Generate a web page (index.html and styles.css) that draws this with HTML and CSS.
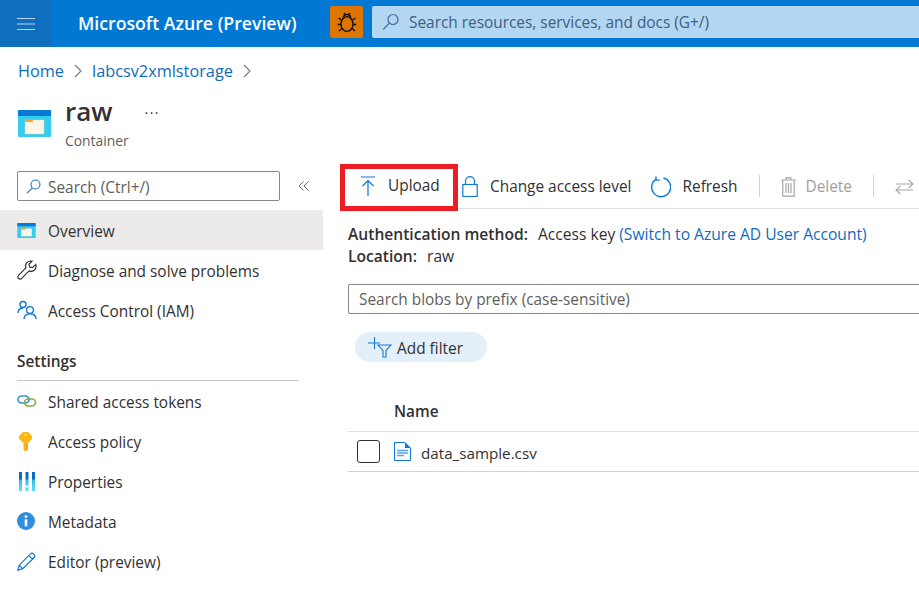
FILE: index.html
```html
<!DOCTYPE html>
<html lang="en">
  <head>
    <meta charset="UTF-8" />
    <title>raw - Microsoft Azure</title>
    <link rel="stylesheet" href="styles.css">
  </head>
  <body>
    <header class="topbar">
      <button class="menu-btn" aria-label="Menu">
        <svg width="18" height="14" viewBox="0 0 18 14"><path d="M0 1.500h18M0 7h18M0 12.500h18" stroke="#b9d6f0" stroke-width="1.200" fill="none"/></svg>
      </button>
      <div class="brand">Microsoft Azure (Preview)</div>
      <div class="bug">
        <svg width="20" height="22" viewBox="0 0 20 22" fill="none" stroke="#111" stroke-width="1.400"><ellipse cx="10" cy="13" rx="6" ry="7.400"/><path d="M6.500 6.500a3.500 3 0 0 1 7 0M7 2l1.600 2.400M13 2l-1.600 2.400M4.500 9 1.500 7M15.500 9l3-2M4 13.500H.8M16 13.500h3.200M4.800 17.500l-2.800 2.500M15.200 17.500l2.800 2.500"/></svg>
      </div>
      <div class="global-search">
        <svg width="18" height="18" viewBox="0 0 18 18" fill="none" stroke="#3d6d9e" stroke-width="1.200"><circle cx="11" cy="6.500" r="5"/><path d="M7.400 10.200 1.200 16.500"/></svg>
        <span>Search resources, services, and docs (G+/)</span>
      </div>
    </header>

    <nav class="crumbs">
      <a>Home</a>
      <svg class="chev" width="8" height="14" viewBox="0 0 8 14"><path d="M1 1l6 6-6 6" fill="none" stroke="#777" stroke-width="1.100"/></svg>
      <a>labcsv2xmlstorage</a>
      <svg class="chev" width="8" height="14" viewBox="0 0 8 14"><path d="M1 1l6 6-6 6" fill="none" stroke="#777" stroke-width="1.100"/></svg>
    </nav>

    <section class="page-head">
      <svg width="33" height="27" viewBox="0 0 33 27">
        <rect width="33" height="27" rx="1" fill="#32cdf0"/>
        <path d="M0 1a1 1 0 0 1 1-1h31a1 1 0 0 1 1 1v5H0z" fill="#0b78d4"/>
        <rect x="7" y="10" width="19" height="14" fill="#fdf6e8" stroke="#dcd2bd" stroke-width=".5"/>
        <rect x="7" y="9" width="8" height="3" rx="1" fill="#f2a33c"/>
      </svg>
      <div class="head-text">
        <div class="head-row">
          <h1>raw</h1>
          <span class="more">&middot;&middot;&middot;</span>
        </div>
        <div class="subtitle">Container</div>
      </div>
    </section>

    <div class="columns">
      <aside class="sidebar">
        <div class="side-search-row">
          <div class="side-search">
            <svg width="15" height="15" viewBox="0 0 15 15" fill="none" stroke="#0f78d4" stroke-width="1.100"><circle cx="9.500" cy="5.500" r="4.500"/><path d="M6.300 8.800 .8 14.300"/></svg>
            <span>Search (Ctrl+/)</span>
          </div>
          <svg class="collapse" width="11" height="10" viewBox="0 0 11 10" fill="none" stroke="#666"><path d="M5.500.5 1 5l4.500 4.500M10.500.5 6 5l4.500 4.500"/></svg>
        </div>

        <a class="nav-item active">
          <span class="nav-icon">
            <svg width="19" height="15" viewBox="0 0 33 27">
              <rect width="33" height="27" rx="1" fill="#32cdf0"/>
              <path d="M0 1a1 1 0 0 1 1-1h31a1 1 0 0 1 1 1v5H0z" fill="#0b78d4"/>
              <rect x="7" y="10" width="19" height="14" fill="#fdf6e8"/>
              <rect x="7" y="9" width="8" height="3" rx="1" fill="#f2a33c"/>
            </svg>
          </span>
          Overview
        </a>
        <a class="nav-item">
          <span class="nav-icon">
            <svg width="20" height="20" viewBox="0 0 20 20" fill="none" stroke="#333" stroke-width="1.200"><path d="M13.500 1a5 5 0 0 0-4.600 6.800L1.500 15.300a2.200 2.200 0 0 0 3.200 3.100l7.400-7.500A5 5 0 0 0 19 5.500l-.3-1-3.300 3.200-2.700-.7-.7-2.700L15 1.200z"/></svg>
          </span>
          Diagnose and solve problems
        </a>
        <a class="nav-item">
          <span class="nav-icon">
            <svg width="20" height="20" viewBox="0 0 20 20" fill="none" stroke="#0f78d4" stroke-width="1.400"><circle cx="6" cy="4.500" r="3"/><circle cx="13" cy="10" r="3.400"/><path d="M.8 13c.3-3 2-4.800 5-4.800M7 19c0-3 2.200-5.300 6-5.300s6 2.300 6 5.300"/></svg>
          </span>
          Access Control (IAM)
        </a>

        <h3 class="side-heading">Settings</h3>

        <a class="nav-item">
          <span class="nav-icon">
            <svg width="20" height="12" viewBox="0 0 20 12" fill="none" stroke-width="1.700"><rect x="1" y="1" width="11" height="7" rx="3.500" stroke="#3f8fdc"/><rect x="7.500" y="4" width="11" height="7" rx="3.500" stroke="#7cb342"/></svg>
          </span>
          Shared access tokens
        </a>
        <a class="nav-item">
          <span class="nav-icon">
            <svg class="key" width="13" height="19" viewBox="0 0 13 19"><path d="M4 0h5l4 4v3l-4 4v6.500L7.500 19h-2L4.500 17.500V11L0 7V4z" fill="#fcb714"/><rect x="5" y="2.500" width="3" height="1.600" rx=".8" fill="#fde08a"/><rect x="7" y="11.500" width="1" height="6" fill="#f29c11"/></svg>
          </span>
          Access policy
        </a>
        <a class="nav-item">
          <span class="nav-icon">
            <svg class="bars" width="16" height="19" viewBox="0 0 16 19">
              <defs>
                <linearGradient id="bar-fill" x1="0" y1="0" x2="0" y2="1">
                  <stop offset=".35" stop-color="#0b6cc4"/>
                  <stop offset=".45" stop-color="#32bdea"/>
                  <stop offset="1" stop-color="#5fe0f5"/>
                </linearGradient>
              </defs>
              <rect width="3" height="19" fill="url(#bar-fill)"/>
              <rect x="6.500" width="3" height="19" fill="url(#bar-fill)"/>
              <rect x="13" width="3" height="19" fill="url(#bar-fill)"/>
              <path d="M6.500 13.500h3v2h-3z" fill="#fff"/>
            </svg>
          </span>
          Properties
        </a>
        <a class="nav-item">
          <span class="nav-icon">
            <svg width="18" height="18" viewBox="0 0 18 18"><circle cx="9" cy="9" r="9" fill="#2e8fe0"/><circle cx="9" cy="4.600" r="1.400" fill="#fff"/><path d="M7.700 7.300h2.600v7H7.700z" fill="#fff"/></svg>
          </span>
          Metadata
        </a>
        <a class="nav-item">
          <span class="nav-icon">
            <svg width="19" height="19" viewBox="0 0 19 19" fill="none" stroke="#0f78d4" stroke-width="1.200"><path d="M.8 18.200l1.400-5L13.500 1.900a2 2 0 0 1 3 0l.7.700a2 2 0 0 1 0 2.900L5.800 16.800zM2.200 13.200l3.600 3.600M11.800 3.600l3.600 3.600"/></svg>
          </span>
          Editor (preview)
        </a>
      </aside>

      <main class="content">
        <div class="toolbar">
          <button class="tool tool-upload">
            <svg width="16" height="21" viewBox="0 0 16 21" fill="none" stroke="#0f78d4" stroke-width="1.200"><path d="M1 1h14M8 20V4.500M2.500 10 8 4.500l5.500 5.500"/></svg>
            Upload
          </button>
          <button class="tool tool-access">
            <svg width="16" height="21" viewBox="0 0 16 21" fill="none" stroke="#0f78d4" stroke-width="1.200"><rect x=".8" y="8.500" width="14.400" height="12"/><path d="M3.500 8.500V5.200a4.500 4.500 0 0 1 9 0v3.300"/></svg>
            Change access level
          </button>
          <button class="tool tool-refresh">
            <svg width="21" height="22" viewBox="0 0 21 22" fill="none" stroke="#0f78d4" stroke-width="1.400"><path d="M13.500 2a9.500 9.500 0 1 1-7 .9M6 .5v3.600h3.800"/></svg>
            Refresh
          </button>
          <span class="tool-sep"></span>
          <button class="tool tool-delete is-off">
            <svg width="15" height="20" viewBox="0 0 15 20" fill="none" stroke="#a6a6a6" stroke-width="1.200"><path d="M0 3h15M5 3V.8h5V3M1.800 3v16.200h11.400V3M5 6v10M7.500 6v10M10 6v10"/></svg>
            Delete
          </button>
          <span class="tool-sep"></span>
          <button class="tool tool-swap is-off">
            <svg width="19" height="16" viewBox="0 0 19 16" fill="none" stroke="#a6a6a6" stroke-width="1.100"><path d="M1 5h17M13.500.8 18 5l-4.500 4.200M18 11H1M5.500 6.800 1 11l4.500 4.200"/></svg>
          </button>
        </div>

        <div class="meta">
          <div><b>Authentication method:</b> Access key <a>(Switch to Azure AD User Account)</a></div>
          <div><b>Location:</b> raw</div>
        </div>

        <div class="blob-search">Search blobs by prefix (case-sensitive)</div>

        <button class="filter-pill">
          <svg width="24" height="21" viewBox="0 0 24 21" fill="none" stroke="#0f78d4" stroke-width="1.100"><path d="M6.500 0v12M0 6h12M10 8h13l-5 5.500V20h-3v-6.500z"/></svg>
          Add filter
        </button>

        <div class="blob-head">Name</div>
        <div class="blob-row">
          <span class="check"></span>
          <svg width="17" height="19" viewBox="0 0 17 19"><path d="M.5.500h10.500l5.500 5.500v12.500H.5z" fill="#fff" stroke="#0f78d4"/><path d="M11 .5v5.500h5.500z" fill="#0f78d4"/><path d="M3 8.500h11M3 11h11M3 13.500h7" stroke="#5ea0ef" stroke-width="1.300"/></svg>
          <span class="blob-name">data_sample.csv</span>
        </div>
      </main>
    </div>
  </body>
</html>
```

FILE: styles.css
```css
:root {
  --azure: #0078d4;
  --link: #0f6cbd;
  --text: #323130;
  --muted: #605e5c;
  --line: #e1dfdd;
}

html,
body {
  height: 100%;
}

body {
  margin: 0;
  overflow: hidden;
  background: white;
  color: var(--text);
  font-family: "Open Sans", "Noto Sans", sans-serif;
  font-size: 15.4px;
  line-height: 20px;
}

button {
  font: inherit;
  color: inherit;
  border: 0;
  background: none;
  padding: 0;
}

/* top bar */
.topbar {
  display: flex;
  align-items: flex-start;
  height: 47px;
  background: var(--azure);
}

.menu-btn {
  display: flex;
  align-items: center;
  justify-content: center;
  flex: none;
  width: 52px;
  height: 47px;
  background: #106ebe;
}

.brand {
  flex: none;
  width: 252px;
  padding-left: 26px;
  color: white;
  font-size: 17.7px;
  font-weight: 600;
  line-height: 46px;
  white-space: nowrap;
}

.bug {
  display: flex;
  align-items: center;
  justify-content: center;
  flex: none;
  width: 33px;
  height: 32px;
  margin: 6px 9px 0 0;
  border-radius: 2px;
  background: #de7500;
}

.global-search {
  display: flex;
  flex: 1;
  align-items: center;
  gap: 9px;
  height: 32px;
  margin-top: 6px;
  padding-left: 10px;
  border-radius: 2px 0 0 2px;
  background: #b3d6f2;
  color: #3e5f80;
}

.global-search span {
  margin-top: 2px;
}

/* breadcrumb + title */
.crumbs {
  display: flex;
  align-items: center;
  gap: 10px;
  padding: 14px 0 0 18px;
  height: 20px;
  font-size: 16.3px;
}

.crumbs a {
  color: var(--link);
}

.page-head {
  display: flex;
  align-items: flex-start;
  gap: 14px;
  height: 56px;
  padding: 0 0 0 18px;
  margin-top: 12px;
}

.page-head > svg {
  margin-top: 17px;
}

.head-row {
  display: flex;
  align-items: center;
  gap: 32px;
  height: 36px;
}

h1 {
  margin: 0;
  font-size: 26px;
  font-weight: 600;
  line-height: 36px;
}

.more {
  margin-top: 4px;
  font-size: 14px;
  letter-spacing: 1.500px;
}

.subtitle {
  margin-top: 2px;
  color: var(--muted);
  font-size: 13.9px;
}

.columns {
  display: flex;
  margin-top: 22px;
}

/* left side */
.sidebar {
  flex: none;
  width: 323px;
}

.side-search-row {
  display: flex;
  align-items: center;
  gap: 18px;
  padding-left: 17px;
  margin-bottom: 9px;
}

.side-search {
  display: flex;
  align-items: center;
  gap: 7px;
  box-sizing: border-box;
  width: 263px;
  height: 30px;
  padding-left: 8px;
  border: 1px solid #8a8886;
  border-radius: 2px;
  color: var(--muted);
}

.side-search span {
  margin-top: 3px;
}

.nav-item {
  display: flex;
  align-items: center;
  box-sizing: border-box;
  height: 40px;
  padding: 4px 0 0 17px;
}

.nav-item.active {
  background: #edebe9;
}

.nav-icon {
  display: flex;
  align-items: center;
  justify-content: flex-start;
  flex: none;
  width: 31px;
  margin-top: -4px;
}

.nav-icon .key,
.nav-icon .bars {
  margin-left: 2px;
}

.side-heading {
  box-sizing: border-box;
  width: 281px;
  height: 29px;
  margin: 22px 0 0 17px;
  border-bottom: 1px solid #c8c6c4;
  font-size: 15.4px;
  font-weight: 600;
  line-height: 20px;
}

/* right side */
.content {
  flex: 1;
  min-width: 0;
  padding-left: 25px;
}

.toolbar {
  position: relative;
  display: flex;
  align-items: center;
  height: 40px;
  border-bottom: 1px solid var(--line);
  margin-top: -3px;
  white-space: nowrap;
}

.tool {
  display: flex;
  align-items: center;
  flex: none;
  padding-bottom: 3px;
}

.tool-upload {
  box-sizing: border-box;
  gap: 12px;
  width: 118px;
  height: 47px;
  margin: 0 0 1px -8px;
  padding-left: 15px;
  border: 5px solid #ee1c25;
}

.tool-access {
  gap: 12px;
  margin-left: 4px;
}

.tool-refresh {
  gap: 11px;
  margin-left: 19px;
}

.tool-sep {
  flex: none;
  width: 1px;
  height: 22px;
  margin: 0 21px 4px;
  background: #d2d0ce;
}

.tool-delete {
  gap: 10px;
}

.is-off {
  color: #a19f9d;
}

.meta {
  margin-top: 14px;
  font-size: 15.6px;
  line-height: 22px;
}

.meta b {
  font-weight: 600;
  margin-right: 6px;
}

.meta a {
  color: var(--link);
}

.blob-search {
  box-sizing: border-box;
  height: 30px;
  margin-top: 17px;
  padding: 5px 10px 3px;
  border: 1px solid #8a8886;
  border-right: 0;
  border-radius: 2px 0 0 2px;
  color: var(--muted);
}

.filter-pill {
  display: flex;
  align-items: center;
  gap: 5px;
  box-sizing: border-box;
  width: 132px;
  height: 30px;
  margin: 18px 0 0 7px;
  padding: 4px 0 0 13px;
  border-radius: 15px;
  background: #e3f0fa;
}

.filter-pill svg {
  margin-top: -4px;
}

.blob-head {
  box-sizing: border-box;
  height: 40px;
  margin-top: 30px;
  padding-left: 46px;
  border-bottom: 1px solid var(--line);
  font-weight: 600;
  line-height: 40px;
}

.blob-row {
  display: flex;
  align-items: center;
  box-sizing: border-box;
  height: 40px;
  padding-left: 9px;
  border-bottom: 1px solid #d2d0ce;
}

.check {
  box-sizing: border-box;
  flex: none;
  width: 23px;
  height: 23px;
  margin-right: 14px;
  border: 1px solid #323130;
  border-radius: 3px;
}

.blob-name {
  margin: 3px 0 0 10px;
  font-size: 15.2px;
}
```
